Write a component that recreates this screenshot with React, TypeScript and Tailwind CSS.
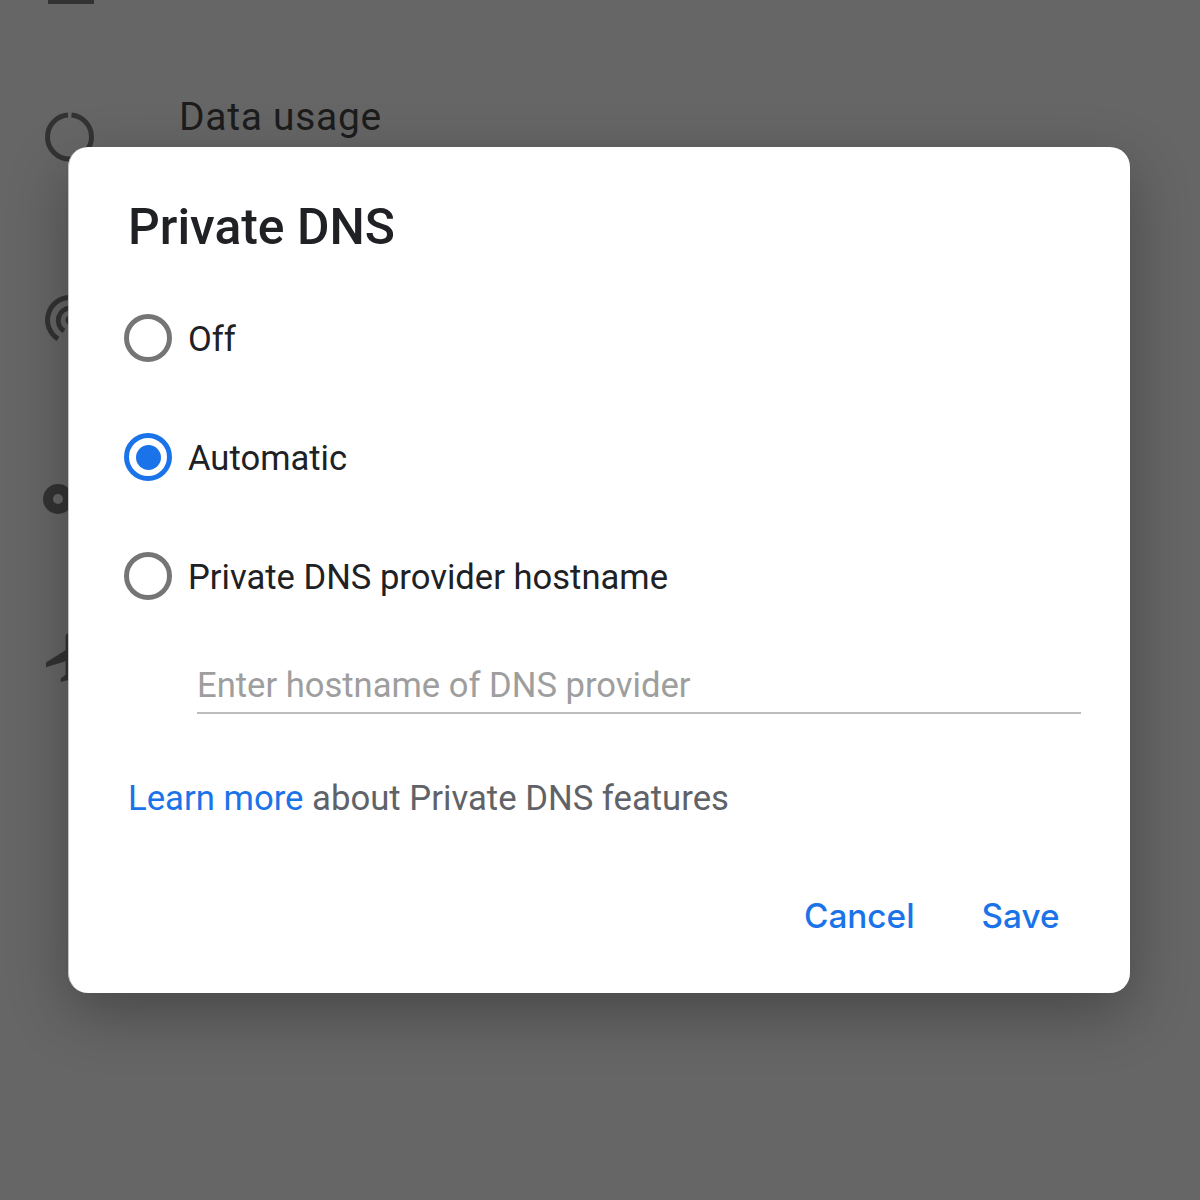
import React from 'react';

const Radio = ({ checked, label }: { checked?: boolean; label: string }) => (
    <div className="flex h-[48px] items-center">
        <div className={`flex h-[48px] w-[48px] items-center justify-center rounded-full border-[5px] ${checked ? 'border-[#1a73e8]' : 'border-[#757575]'}`}>
            {checked && <div className="h-[25px] w-[25px] rounded-full bg-[#1a73e8]" />}
        </div>
        <span className="ml-[16px] mt-[2px] text-[34.6px] leading-[48px] text-[#202124]">{label}</span>
    </div>
);

const App: React.FC = () => {
    return (
        <div className="relative h-[1200px] w-[1200px] overflow-hidden bg-[#666666] font-['Roboto',sans-serif]">
            {/* settings list behind the dialog */}
            <div className="flex flex-col pl-[41px]">
                <div className="ml-[7px] h-[4px] w-[46px] bg-[#333333]" />
                <div className="flex h-[180px] pt-[89px]">
                    <svg viewBox="0 0 58 58" className="mt-[15px] h-[58px] w-[58px] shrink-0 fill-none stroke-[#333333] stroke-[5px]">
                        <path d="M27 7.1A22 22 0 1 0 50.5 29A22 22 0 0 0 30.5 7.1" />
                    </svg>
                    <span className="ml-[80px] text-[39px] leading-[48px] tracking-[0.7px] text-[#1c1c1c]">Data usage</span>
                </div>
                <div className="flex h-[180px] pt-[106px]">
                    <svg viewBox="0 0 40 60" className="ml-[2px] h-[60px] w-[40px] fill-none stroke-[#333333] stroke-[5px]">
                        <path d="M15 49A22.5 22.5 0 0 1 27 7.5" />
                        <path d="M21 41A12.5 12.5 0 0 1 27 18" />
                        <circle cx="27" cy="30" r="4.5" className="fill-[#333333] stroke-0" />
                    </svg>
                </div>
                <div className="flex h-[180px] pt-[120px]">
                    <div className="ml-[2px] h-[30px] w-[30px] rounded-full border-[10px] border-[#333333]" />
                </div>
                <div className="flex h-[180px] pt-[84px]">
                    <svg viewBox="0 0 24 24" className="h-[59px] w-[59px] fill-[#333333]">
                        <path d="M21 16v-2l-8-5V3.5c0-.83-.67-1.5-1.5-1.5S10 2.67 10 3.5V9l-8 5v2l8-2.5V19l-2 1.5V22l3.5-1 3.5 1v-1.5L13 19v-5.5l8 2.5z" />
                    </svg>
                </div>
            </div>

            <div className="absolute inset-0 pl-[68px] pt-[147px]">
                <div className="flex h-[846px] w-[1062px] flex-col rounded-[20px] border-l border-l-[#c4c4c4] bg-white pl-[55px] pr-[49px] pt-[52px] shadow-[0_20px_60px_rgba(0,0,0,0.3)]">
                    <h1 className="pl-[4px] text-[49.8px] font-medium leading-[56px] text-[#202124]">Private DNS</h1>
                    <div className="mt-[59px] flex flex-col gap-[71px]">
                        <Radio label="Off" />
                        <Radio checked label="Automatic" />
                        <Radio label="Private DNS provider hostname" />
                    </div>
                    <div className="ml-[73px] mt-[61px] border-b-[2px] border-[#bdbdbd] pb-[3px] text-[34.6px] leading-[48px] text-[#9e9e9e]">
                        Enter hostname of DNS provider
                    </div>
                    <p className="mt-[60px] pl-[4px] text-[34.7px] leading-[48px] text-[#5f6368]">
                        <span className="text-[#1a73e8]">Learn more</span> about Private DNS features
                    </p>
                    <div className="mt-[70px] flex justify-end gap-[67px] pr-[21.5px] font-['Inter',sans-serif] text-[33.3px] font-medium leading-[48px] text-[#1a73e8]">
                        <span>Cancel</span>
                        <span>Save</span>
                    </div>
                </div>
            </div>
        </div>
    );
};

export default App;
